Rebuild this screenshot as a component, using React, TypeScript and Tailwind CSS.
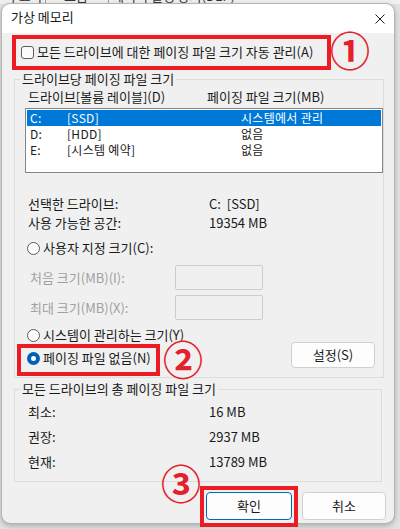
import React from 'react';

const text = "font-['Noto_Sans_CJK_KR','Noto_Sans',sans-serif] text-[13px] leading-[16px]";

function CheckBox() {
  return <span className="block w-[13px] h-[13px] shrink-0 rounded-[3px] border border-[#5c5c5c] bg-[#fbfbfb]" />;
}

function Radio({ on }: { on?: boolean }) {
  if (on) {
    return (
      <span className="flex w-[13px] h-[13px] shrink-0 items-center justify-center rounded-full bg-[#005fb8]">
        <span className="block w-[5px] h-[5px] rounded-full bg-white" />
      </span>
    );
  }
  return <span className="block w-[13px] h-[13px] shrink-0 rounded-full border border-[#5c5c5c] bg-[#fbfbfb]" />;
}

function Mark({ n, className }: { n: string; className: string }) {
  return (
    <div className={`absolute flex w-[36px] h-[36px] items-center justify-center text-[#e4202a] font-['Noto_Sans_CJK_KR',sans-serif] text-[40px] leading-none font-bold ${className}`}>
      {n}
    </div>
  );
}

const drives = [
  { d: 'C:', label: '[SSD]', size: '시스템에서 관리', sel: true },
  { d: 'D:', label: '[HDD]', size: '없음' },
  { d: 'E:', label: '[시스템 예약]', size: '없음' },
];

export default function App() {
  return (
    <div className={`relative w-[400px] h-[529px] overflow-hidden bg-[#e2e2e2] text-[#1a1a1a] ${text}`}>
      {/* window behind the dialog */}
      <div className="h-[4px] overflow-hidden bg-[#f0f0f0]">
        <div className="-mt-[12px] flex h-[16px] text-[#333]">
          <span className="w-[45px] pl-[4px] overflow-hidden whitespace-nowrap">각 효과</span>
          <span className="w-[63px] border-l border-[#999] pl-[18px]">고급</span>
          <span className="border-l border-[#999] pl-[3px]">데이터 실행 방지(DEP)</span>
        </div>
      </div>

      <div className="ml-[2px] w-[392px] h-[519px] flex flex-col overflow-hidden rounded-[8px] bg-[#f0f0f0] outline outline-1 outline-[#b5b5b5] shadow-[0_2px_6px_rgba(0,0,0,0.3)]">
        <div className="h-[29px] shrink-0 bg-white flex justify-between pl-[9px] pr-[9px]">
          <span className="pt-[5px]">가상 메모리</span>
          <svg width="10" height="10" viewBox="0 0 10 10" className="mt-[10px]" stroke="#1a1a1a" strokeWidth="1">
            <path d="M0.5 0.5L9.5 9.5M9.5 0.5L0.5 9.5" />
          </svg>
        </div>

        <div className="mt-[9px] h-[20px] pl-[19px] flex items-center gap-[3px]">
          <CheckBox />
          <span>모든 드라이브에 대한 페이징 파일 크기 자동 관리(A)</span>
        </div>

        <fieldset className="mt-[9px] ml-[12px] w-[368px] border border-[#dcdcdc] pb-[9px]">
          <legend className="ml-[5px] px-[2px]">드라이브당 페이징 파일 크기</legend>
          <div className="mt-[2px] h-[16px] flex pl-[13px]">
            <span className="w-[179px]">드라이브[볼륨 레이블](D)</span>
            <span>페이징 파일 크기(MB)</span>
          </div>
          <div className="mt-[3px] ml-[10px] w-[358px] h-[65px] border border-[#82878f] bg-white p-px text-[12px] tracking-[0.3px]">
            {drives.map((r) => (
              <div key={r.d} className={`h-[16px] flex items-center pl-[3px] ${r.sel ? 'bg-[#0078d7] text-white' : ''}`}>
                <span className="w-[37px] leading-[14px]">{r.d}</span>
                <span className="w-[174px] leading-[14px]">{r.label}</span>
                <span className="leading-[14px]">{r.size}</span>
              </div>
            ))}
          </div>

          <div className="mt-[21px] pl-[13px]">
            <div className="h-[19px] flex items-center">
              <span className="w-[181px]">선택한 드라이브:</span>
              <span>C:&nbsp;&nbsp;[SSD]</span>
            </div>
            <div className="h-[19px] flex items-center">
              <span className="w-[181px]">사용 가능한 공간:</span>
              <span>19354 MB</span>
            </div>
          </div>

          <div className="mt-[6px] h-[20px] pl-[12px] flex items-center gap-[3px]">
            <Radio />
            <span>사용자 지정 크기(C):</span>
          </div>

          <div className="mt-[7px] h-[25px] pl-[15px] flex items-center text-[#a0a0a0]">
            <span className="w-[145px]">처음 크기(MB)(I):</span>
            <span className="block w-[88px] h-[25px] rounded-[2px] border border-[#cccccc]" />
          </div>
          <div className="mt-[5px] h-[25px] pl-[15px] flex items-center text-[#a0a0a0]">
            <span className="w-[145px]">최대 크기(MB)(X):</span>
            <span className="block w-[88px] h-[25px] rounded-[2px] border border-[#cccccc]" />
          </div>

          <div className="mt-[5px] flex items-end justify-between pr-[8px]">
            <div>
              <div className="h-[20px] pl-[12px] flex items-center gap-[3px]">
                <Radio />
                <span>시스템이 관리하는 크기(Y)</span>
              </div>
              <div className="mt-[3px] h-[20px] pl-[12px] flex items-center gap-[3px]">
                <Radio on />
                <span>페이징 파일 없음(N)</span>
              </div>
            </div>
            <button className="w-[84px] h-[26px] rounded-[4px] border border-[#d0d0d0] bg-[#fdfdfd]">설정(S)</button>
          </div>
        </fieldset>

        <fieldset className="mt-[3px] ml-[12px] w-[368px] border border-[#dcdcdc] pb-[7px]">
          <legend className="ml-[5px] px-[2px]">모든 드라이브의 총 페이징 파일 크기</legend>
          <div className="mt-[2px] pl-[13px]">
            {[
              ['최소:', '16 MB'],
              ['권장:', '2937 MB'],
              ['현재:', '13789 MB'],
            ].map(([k, v]) => (
              <div key={k} className="h-[25px] flex items-center">
                <span className="w-[181px]">{k}</span>
                <span>{v}</span>
              </div>
            ))}
          </div>
        </fieldset>

        <div className="mt-[10px] flex justify-end gap-[10px] pr-[8px]">
          <button className="w-[86px] h-[28px] rounded-[4px] border-[1.5px] border-[#0067c0] bg-[#fdfdfd]">확인</button>
          <button className="w-[84px] h-[28px] rounded-[4px] border border-[#d0d0d0] bg-[#fdfdfd]">취소</button>
        </div>
      </div>

      {/* annotations */}
      <div className="absolute left-[12px] top-[35px] w-[319px] h-[35px] border-4 border-[#ec1c24]" />
      <div className="absolute left-[17px] top-[344px] w-[143px] h-[32px] border-4 border-[#ec1c24]" />
      <div className="absolute left-[200px] top-[486px] w-[98px] h-[41px] border-4 border-[#ec1c24]" />
      <Mark n="①" className="left-[332px] top-[31px]" />
      <Mark n="②" className="left-[165px] top-[340px]" />
      <Mark n="③" className="left-[163px] top-[464px]" />
    </div>
  );
}
